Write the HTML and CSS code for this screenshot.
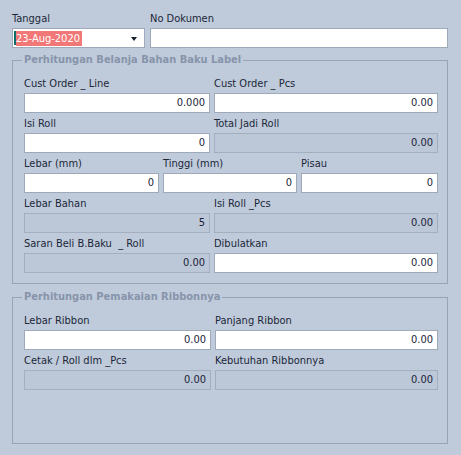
FILE: index.html
```html
<!DOCTYPE html>
<html>
<head>
<meta charset="utf-8">
<link rel="stylesheet" href="styles.css">
</head>
<body>
<div class="form">
  <div class="top-row">
    <div class="field">
      <div class="lbl">Tanggal</div>
      <div class="inp date"><span class="caret"></span><span class="sel">23-Aug-2020</span><span class="arrow"></span></div>
    </div>
    <div class="field">
      <div class="lbl">No Dokumen</div>
      <div class="inp"></div>
    </div>
  </div>

  <fieldset class="group g1">
    <legend>Perhitungan Belanja Bahan Baku Label</legend>
    <div class="row two">
      <div class="field"><div class="lbl">Cust Order _ Line</div><div class="inp num">0.000</div></div>
      <div class="field"><div class="lbl">Cust Order _ Pcs</div><div class="inp num">0.00</div></div>
    </div>
    <div class="row two">
      <div class="field"><div class="lbl">Isi Roll</div><div class="inp num">0</div></div>
      <div class="field"><div class="lbl">Total Jadi Roll</div><div class="inp num ro">0.00</div></div>
    </div>
    <div class="row three">
      <div class="field"><div class="lbl">Lebar (mm)</div><div class="inp num">0</div></div>
      <div class="field"><div class="lbl">Tinggi (mm)</div><div class="inp num">0</div></div>
      <div class="field"><div class="lbl">Pisau</div><div class="inp num">0</div></div>
    </div>
    <div class="row two">
      <div class="field"><div class="lbl">Lebar Bahan</div><div class="inp num ro">5</div></div>
      <div class="field"><div class="lbl">Isi Roll _Pcs</div><div class="inp num ro">0.00</div></div>
    </div>
    <div class="row two">
      <div class="field"><div class="lbl">Saran Beli B.Baku &nbsp;_ Roll</div><div class="inp num ro">0.00</div></div>
      <div class="field"><div class="lbl">Dibulatkan</div><div class="inp num">0.00</div></div>
    </div>
  </fieldset>

  <fieldset class="group g2">
    <legend>Perhitungan Pemakaian Ribbonnya</legend>
    <div class="row two b">
      <div class="field"><div class="lbl">Lebar Ribbon</div><div class="inp num">0.00</div></div>
      <div class="field"><div class="lbl">Panjang Ribbon</div><div class="inp num">0.00</div></div>
    </div>
    <div class="row two b">
      <div class="field"><div class="lbl">Cetak / Roll dlm _Pcs</div><div class="inp num ro">0.00</div></div>
      <div class="field"><div class="lbl">Kebutuhan Ribbonnya</div><div class="inp num ro">0.00</div></div>
    </div>
  </fieldset>
</div>
</body>
</html>
```
FILE: styles.css
```css
html, body {
  margin: 0;
  padding: 0;
  background: #bfcbdb;
}
body {
  width: 461px;
  height: 455px;
  overflow: hidden;
  font-family: "DejaVu Sans", sans-serif;
  font-stretch: condensed;
  font-size: 11px;
  color: #1c2738;
}
.form {
  padding: 8px 13px 0 12px;
}
.top-row {
  display: grid;
  grid-template-columns: 133px 1fr;
  column-gap: 5px;
}
.lbl {
  box-sizing: border-box;
  height: 20px;
  padding-top: 4px;
  line-height: 14px;
  white-space: nowrap;
}
.inp {
  box-sizing: border-box;
  height: 20px;
  background: #ffffff;
  border: 1px solid #9ea9b9;
  line-height: 18px;
  padding: 0 4px;
  color: #1c1f3a;
  white-space: nowrap;
  overflow: hidden;
}
.inp.num {
  text-align: right;
}
.inp.ro {
  background: #bcc7d7;
  border-color: #a3aebe;
}
.date {
  display: flex;
  align-items: center;
  padding: 0 0 0 1px;
  position: relative;
}
.caret {
  width: 2px;
  height: 14px;
  background: #0d6b6b;
}
.sel {
  background: #f27777;
  color: #ffffff;
  line-height: 15px;
  padding-right: 2px;
}
.arrow {
  position: absolute;
  right: 7px;
  top: 8px;
  width: 0;
  height: 0;
  border-left: 3px solid transparent;
  border-right: 3px solid transparent;
  border-top: 4px solid #1a1f2e;
}
.group {
  margin: 5px 0 0 0;
  border: 1px solid #98a4b6;
  padding: 6px 10px 10px 11px;
  min-width: 0;
}
.group legend {
  font-weight: bold;
  color: #8794aa;
  padding: 0 2px;
  margin-left: -2px;
  line-height: 14px;
  white-space: nowrap;
}
.g2 {
  margin-top: 6px;
  height: 154px;
  box-sizing: border-box;
}
.row {
  display: grid;
  column-gap: 4px;
}
.row.two {
  grid-template-columns: 186px 224px;
}
.row.two.b {
  grid-template-columns: 187px 223px;
}
.row.three {
  grid-template-columns: 135px 134px 137px;
}
```
